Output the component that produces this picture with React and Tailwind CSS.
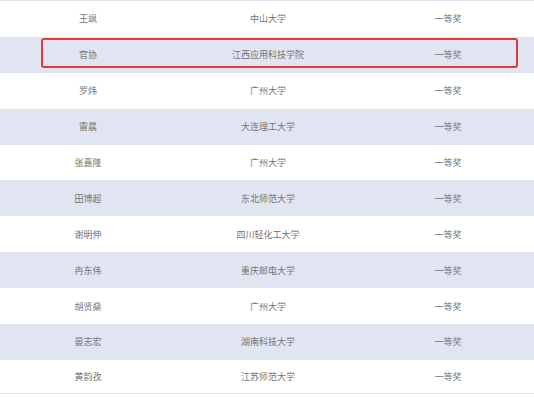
import React from "react";

const rows = [
  ["王飒", "中山大学"],
  ["官协", "江西应用科技学院"],
  ["罗炜", "广州大学"],
  ["雷晨", "大连理工大学"],
  ["张嘉隆", "广州大学"],
  ["田博超", "东北师范大学"],
  ["谢明伸", "四川轻化工大学"],
  ["冉东伟", "重庆邮电大学"],
  ["胡贤燊", "广州大学"],
  ["晏志宏", "湖南科技大学"],
  ["黄韵孜", "江苏师范大学"],
];

export default function App() {
  return (
    <div
      className="w-[534px] h-[397px] overflow-hidden bg-white text-[#747474] text-[9px] leading-none"
      style={{ fontFamily: '"Noto Sans CJK SC", "Noto Sans", sans-serif' }}
    >
      <div className="h-px bg-[#e1e5f2]" />
      <div className="-ml-[2px] w-[540px]">
        {rows.map(([name, school], i) => (
          <div
            key={i}
            className={`relative grid grid-cols-3 items-center ${
              i === rows.length - 1 ? "h-[33px]" : "h-[35.9px]"
            } ${i % 2 === 1 ? "bg-[#e1e5f2]" : "bg-white"}`}
          >
            <div className="text-center">{name}</div>
            <div className="text-center">{school}</div>
            <div className="text-center">一等奖</div>
            {i === 1 && (
              <div className="absolute left-[43px] top-px w-[477px] h-[30px] border-2 border-[#e03a3e] rounded-[3px]" />
            )}
          </div>
        ))}
      </div>
      <div className="h-px bg-[#e4e4e4]" />
    </div>
  );
}
